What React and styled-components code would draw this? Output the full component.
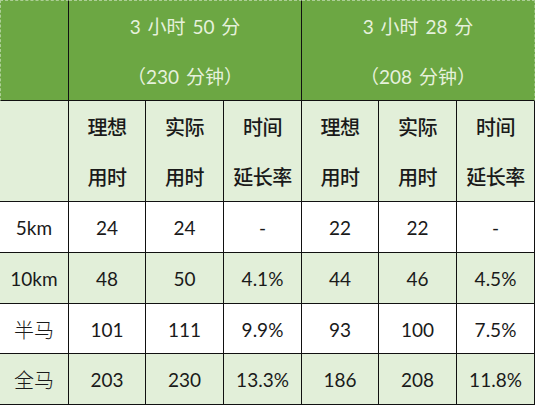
import React from 'react';
import styled, { createGlobalStyle } from 'styled-components';

const GlobalStyle = createGlobalStyle`
  html, body {
    margin: 0;
    padding: 0;
    background: #ffffff;
  }
`;

const cols = [
  { head: '3 小时 50 分', sub: '（230 分钟）' },
  { head: '3 小时 28 分', sub: '（208 分钟）' },
];

const subHeads = [
  ['理想', '用时'],
  ['实际', '用时'],
  ['时间', '延长率'],
];

const rows = [
  { label: '5km', values: ['24', '24', '-', '22', '22', '-'], shaded: false },
  { label: '10km', values: ['48', '50', '4.1%', '44', '46', '4.5%'], shaded: true },
  { label: '半马', values: ['101', '111', '9.9%', '93', '100', '7.5%'], shaded: false },
  { label: '全马', values: ['203', '230', '13.3%', '186', '208', '11.8%'], shaded: true },
];

const App = () => (
  <>
    <GlobalStyle />
    <Table>
      <TopCell $corner />
      {cols.map((c, i) => (
        <TopCell key={c.head} $span={3} $last={i === cols.length - 1}>
          <HeadLine>{c.head}</HeadLine>
          <HeadLine>{c.sub}</HeadLine>
        </TopCell>
      ))}

      <SubCell />
      {[0, 1].map((g) =>
        subHeads.map(([a, b], j) => (
          <SubCell key={`${g}-${j}`}>
            <SubLine>{a}</SubLine>
            <SubLine>{b}</SubLine>
          </SubCell>
        ))
      )}

      {rows.map((r) => (
        <React.Fragment key={r.label}>
          <Cell $shaded={r.shaded}>
            <Label $cjk={!/km/.test(r.label)}>{r.label}</Label>
          </Cell>
          {r.values.map((v, k) => (
            <Cell key={k} $shaded={r.shaded}>
              <Value>{v}</Value>
            </Cell>
          ))}
        </React.Fragment>
      ))}
    </Table>
  </>
);

const line = '1px solid #111';

const Table = styled.div`
  width: 535px;
  height: 405px;
  display: grid;
  grid-template-columns: 69px 77px 78px 78px 77px 78px 78px;
  grid-template-rows: 101px 101px 51px 51px 50px 51px;
  box-sizing: border-box;
`;

const BaseCell = styled.div`
  box-sizing: border-box;
  border-right: ${line};
  border-bottom: ${line};
  display: flex;
  flex-direction: column;
  align-items: center;
  justify-content: center;
`;

const TopCell = styled(BaseCell)`
  grid-column: span ${({ $span }) => $span || 1};
  background: #6ca743;
  border-top: 1px dashed rgba(226, 239, 218, 0.55);
  border-left: ${({ $corner }) => ($corner ? '1px dashed rgba(226, 239, 218, 0.55)' : 'none')};
  border-right: ${({ $last }) => ($last ? '1px dashed rgba(226, 239, 218, 0.35)' : line)};
  gap: 22px;
  padding-top: 2px;
`;

const HeadLine = styled.div`
  font-family: Lato, "Noto Sans CJK SC", sans-serif;
  font-size: 19px;
  line-height: 28px;
  color: #e6f1dc;
  white-space: pre;
  word-spacing: 2px;
`;

const SubCell = styled(BaseCell)`
  background: #e2efd9;
  gap: 22px;
  padding-top: 2px;
`;

const SubLine = styled.div`
  font-family: "Noto Sans CJK SC", sans-serif;
  font-weight: 500;
  font-size: 20px;
  line-height: 28px;
  color: #1a1a1a;
  letter-spacing: -0.5px;
`;

const Cell = styled(BaseCell)`
  background: ${({ $shaded }) => ($shaded ? '#e2efd9' : '#ffffff')};
`;

const Label = styled.div`
  font-family: ${({ $cjk }) =>
    $cjk ? '"Noto Sans CJK SC", sans-serif' : 'Lato, "Noto Sans CJK SC", sans-serif'};
  font-weight: ${({ $cjk }) => ($cjk ? 300 : 400)};
  font-size: ${({ $cjk }) => ($cjk ? '20px' : '19px')};
  color: #1a1a1a;
  padding-top: 1px;
`;

const Value = styled.div`
  font-family: Lato, sans-serif;
  font-size: 19px;
  color: #1a1a1a;
  padding-top: 1px;
`;

export default App;
